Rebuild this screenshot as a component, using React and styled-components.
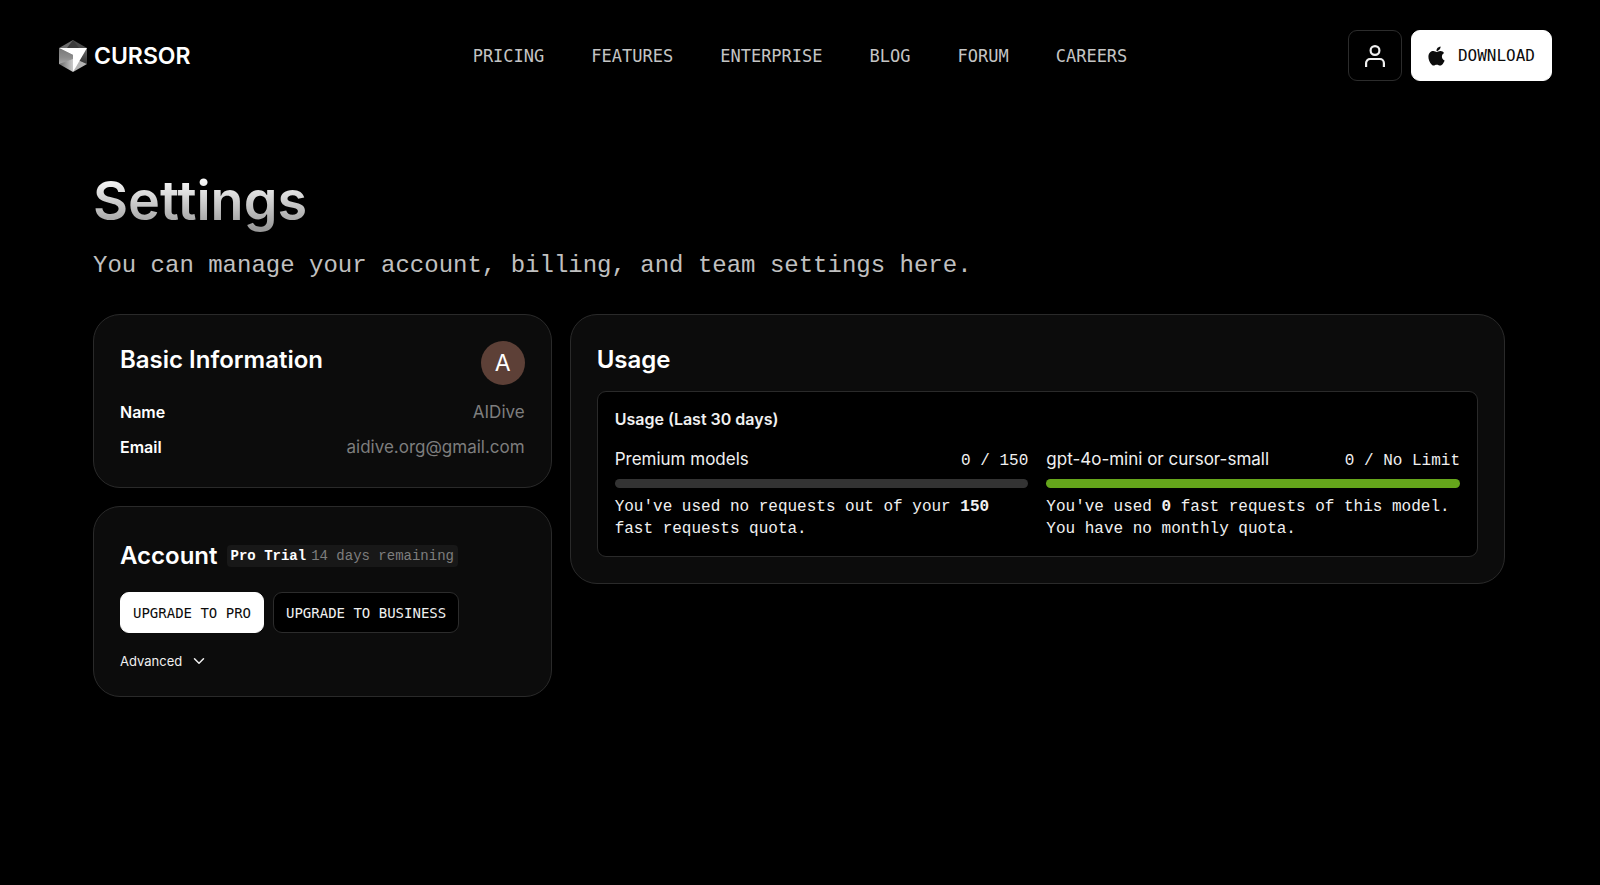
import styled, { createGlobalStyle } from 'styled-components';
import { FaApple } from 'react-icons/fa';
import { FiChevronDown } from 'react-icons/fi';

const sans = `Inter, 'Liberation Sans', sans-serif`;
const mono = `'Liberation Mono', 'Courier New', monospace`;
// for uppercase labels (nav, buttons)
const capsMono = `'DejaVu Sans Mono', monospace`;

const GlobalStyle = createGlobalStyle`
  * {
    box-sizing: border-box;
    margin: 0;
    padding: 0;
  }
  body {
    background: #000;
    color: #f0f0f0;
    font-family: ${sans};
  }
  a {
    color: inherit;
    text-decoration: none;
  }
  button {
    cursor: pointer;
  }
`;

const HeaderBlock = styled.header`
  display: grid;
  grid-template-columns: 1fr auto 1fr;
  align-items: center;
  padding: 30px 48px;
  .logo {
    display: flex;
    align-items: center;
    gap: 7px;
    padding-left: 11px;
    font: 600 23px/32px ${sans};
    color: #fff;
  }
  .nav-list {
    display: flex;
    gap: 47px;
    list-style: none;
    font: 17px/24px ${capsMono};
    color: #c4c4c4;
  }
  .header-actions {
    display: flex;
    justify-content: flex-end;
    gap: 9px;
  }
  .apple-icon {
    width: 17px;
    height: 22px;
  }
`;

const Button = styled.button`
  display: flex;
  justify-content: center;
  align-items: center;
  gap: 13px;
  height: ${({ $large }) => ($large ? '51px' : '41px')};
  padding: 0 ${({ $large }) => ($large ? '16px' : '12px')};
  border: 1px solid ${({ $primary }) => ($primary ? '#fff' : '#2c2c2c')};
  border-radius: 9px;
  background: ${({ $primary }) => ($primary ? '#fff' : '#000')};
  color: ${({ $primary }) => ($primary ? '#0c0c0c' : '#f0f0f0')};
  font: ${({ $large }) => ($large ? '16px' : '14px')} / 20px ${capsMono};
`;

const MainBlock = styled.main`
  padding: 57px 95px 60px 93px;
`;

const PageTitle = styled.h1`
  width: fit-content;
  font: 600 54px/66px ${sans};
  background: linear-gradient(#fff 12%, #999 92%);
  background-clip: text;
  color: transparent;
`;

const PageDesc = styled.p`
  margin: 14px 0 30px;
  font: 24px/36px ${mono};
  color: #c0c0c0;
`;

const CardGrid = styled.div`
  display: grid;
  grid-template-columns: repeat(3, minmax(0, 1fr));
  align-items: start;
  gap: 18px;
`;

const CardColumn = styled.div`
  display: flex;
  flex-direction: column;
  gap: 18px;
  grid-column: span ${({ $span }) => $span || 1};
`;

const Card = styled.section`
  padding: 26px;
  border: 1px solid #2a2a2a;
  border-radius: 27px;
  background: #0c0c0c;
`;

const CardTitle = styled.h2`
  font: 600 24px/38px ${sans};
  color: #fff;
`;

const BasicBlock = styled(Card)`
  .card-head {
    display: flex;
    justify-content: space-between;
    align-items: flex-start;
    margin-bottom: 14px;
  }
  .avatar {
    display: flex;
    justify-content: center;
    align-items: center;
    width: 44px;
    height: 44px;
    border-radius: 50%;
    background: #5d4037;
    color: #fff;
    font: 23px/44px ${sans};
  }
  .info-list {
    display: flex;
    flex-direction: column;
    gap: 8px;
  }
  .info-row {
    display: flex;
    justify-content: space-between;
    align-items: baseline;
    line-height: 27px;
    dt {
      font-size: 16px;
      font-weight: 600;
      color: #fff;
    }
    dd {
      font-size: 17px;
      color: #7e7e7e;
    }
  }
`;

const AccountBlock = styled(Card)`
  .account-head {
    display: flex;
    align-items: center;
    gap: 9px;
    padding: 4px 0;
    margin-bottom: 13px;
  }
  .badge {
    display: flex;
    gap: 5px;
    padding: 0 4px;
    border-radius: 4px;
    background: #181818;
    color: #7e7e7e;
    font: 14px/22px ${mono};
    strong {
      color: #fff;
    }
  }
  .account-btns {
    display: flex;
    gap: 9px;
    margin-bottom: 19px;
  }
  .advanced-btn {
    display: flex;
    align-items: center;
    gap: 8px;
    border: 0;
    background: none;
    color: #f0f0f0;
    font: 13px/18px ${sans};
  }
`;

const UsageBox = styled.div`
  margin-top: 12px;
  padding: 16px 17px;
  border: 1px solid #2a2a2a;
  border-radius: 9px;
  background: #000;
  h3 {
    margin-bottom: 16px;
    font: 600 16px/22px ${sans};
  }
  .usage-list {
    display: grid;
    grid-template-columns: repeat(2, minmax(0, 1fr));
    gap: 18px;
  }
`;

const UsageItem = styled.div`
  .usage-head {
    display: flex;
    justify-content: space-between;
    align-items: baseline;
    font-size: 17px;
    line-height: 27px;
  }
  .usage-count,
  .usage-text {
    font: 16px/22px ${mono};
  }
`;

const UsageBar = styled.div`
  height: 9px;
  margin: 6px 0 8px;
  border-radius: 5px;
  background: ${({ $unlimited }) => ($unlimited ? '#65a51b' : '#333')};
`;

const navItems = ['PRICING', 'FEATURES', 'ENTERPRISE', 'BLOG', 'FORUM', 'CAREERS'];

const userInfo = [
  { label: 'Name', value: 'AIDive' },
  { label: 'Email', value: 'aidive.org@gmail.com' },
];

const CubeLogo = () => (
  <svg width='28' height='32' viewBox='0 0 28 32' aria-hidden='true'>
    <defs>
      <linearGradient id='cube-left' x1='0' y1='0' x2='0' y2='1'>
        <stop offset='0' stopColor='#777' />
        <stop offset='0.6' stopColor='#8c8c8c' />
        <stop offset='1' stopColor='#a8a8a8' />
      </linearGradient>
      <linearGradient id='cube-bottom' x1='0' y1='0' x2='1' y2='0'>
        <stop offset='0' stopColor='#666' />
        <stop offset='1' stopColor='#ccc' />
      </linearGradient>
      <linearGradient id='cube-right' x1='0' y1='0' x2='0' y2='1'>
        <stop offset='0' stopColor='#6a6a6a' />
        <stop offset='1' stopColor='#333' />
      </linearGradient>
    </defs>
    <path d='M14 0L0 8h14z' fill='#6e6e6e' />
    <path d='M14 0l14 8H14z' fill='#4a4a4a' />
    <path d='M14 0L8 8h12z' fill='#3c3c3c' />
    <path d='M0 8l14 7v9L0 24z' fill='url(#cube-left)' />
    <path d='M0 24l14-5v13z' fill='url(#cube-bottom)' />
    <path d='M28 8v16l-9-4z' fill='url(#cube-right)' />
    <path d='M28 24l-9-4-5 12z' fill='#b4b4b4' />
    <path d='M0 8h28L14 32V15z' fill='#fff' />
  </svg>
);

const UserIcon = () => (
  <svg width='20' height='22' viewBox='0 0 20 22' fill='none' stroke='currentColor' strokeWidth='2.2' aria-hidden='true'>
    <circle cx='10' cy='5.5' r='4.4' />
    <path d='M1.1 22v-4a4 4 0 0 1 4-4h9.8a4 4 0 0 1 4 4v4' />
  </svg>
);

const Header = () => {
  return (
    <HeaderBlock>
      <a className='logo' href='#home'>
        <CubeLogo />
        <span>CURSOR</span>
      </a>
      <nav>
        <ul className='nav-list'>
          {navItems.map((item) => (
            <li key={item}>
              <a href={`#${item.toLowerCase()}`}>{item}</a>
            </li>
          ))}
        </ul>
      </nav>
      <div className='header-actions'>
        <Button $large aria-label='Account'>
          <UserIcon />
        </Button>
        <Button $large $primary>
          <FaApple className='apple-icon' />
          DOWNLOAD
        </Button>
      </div>
    </HeaderBlock>
  );
};

const App = () => {
  return (
    <>
      <GlobalStyle />
      <Header />
      <MainBlock>
        <PageTitle>Settings</PageTitle>
        <PageDesc>You can manage your account, billing, and team settings here.</PageDesc>
        <CardGrid>
          <CardColumn>
            {/* basic information */}
            <BasicBlock>
              <div className='card-head'>
                <CardTitle>Basic Information</CardTitle>
                <span className='avatar'>A</span>
              </div>
              <dl className='info-list'>
                {userInfo.map(({ label, value }) => (
                  <div className='info-row' key={label}>
                    <dt>{label}</dt>
                    <dd>{value}</dd>
                  </div>
                ))}
              </dl>
            </BasicBlock>
            {/* account */}
            <AccountBlock>
              <div className='account-head'>
                <CardTitle>Account</CardTitle>
                <p className='badge'>
                  <strong>Pro Trial</strong>
                  <span>14 days remaining</span>
                </p>
              </div>
              <div className='account-btns'>
                <Button $primary>UPGRADE TO PRO</Button>
                <Button>UPGRADE TO BUSINESS</Button>
              </div>
              <button className='advanced-btn'>
                Advanced
                <FiChevronDown size={18} />
              </button>
            </AccountBlock>
          </CardColumn>
          {/* usage */}
          <CardColumn $span={2}>
            <Card>
              <CardTitle>Usage</CardTitle>
              <UsageBox>
                <h3>Usage (Last 30 days)</h3>
                <div className='usage-list'>
                  <UsageItem>
                    <div className='usage-head'>
                      <span>Premium models</span>
                      <span className='usage-count'>0 / 150</span>
                    </div>
                    <UsageBar />
                    <p className='usage-text'>
                      You've used no requests out of your <strong>150</strong> fast requests quota.
                    </p>
                  </UsageItem>
                  <UsageItem>
                    <div className='usage-head'>
                      <span>gpt-4o-mini or cursor-small</span>
                      <span className='usage-count'>0 / No Limit</span>
                    </div>
                    <UsageBar $unlimited />
                    <p className='usage-text'>
                      You've used <strong>0</strong> fast requests of this model. You have no monthly quota.
                    </p>
                  </UsageItem>
                </div>
              </UsageBox>
            </Card>
          </CardColumn>
        </CardGrid>
      </MainBlock>
    </>
  );
};

export default App;
